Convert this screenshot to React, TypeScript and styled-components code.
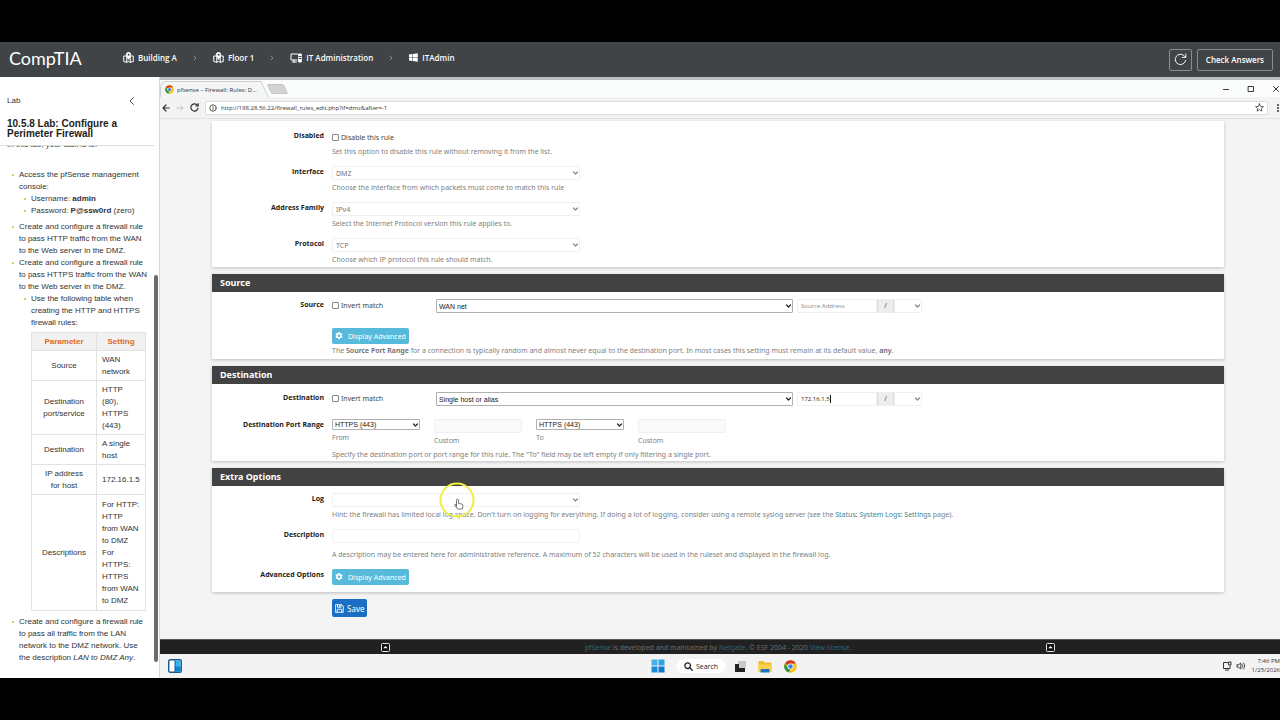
import React from "react";
import styled, { createGlobalStyle, css } from "styled-components";

const GlobalStyle = createGlobalStyle`
  *, *::before, *::after { box-sizing: border-box; }
  html { background: #000; }
  body { margin: 0; background: #000; }
  ul { list-style: none; margin: 0; padding: 0; }
  p, h1, h2 { margin: 0; }
  button, input, select { font: inherit; margin: 0; }
  svg { flex: none; }
`;

const ui = `"Open Sans", "Noto Sans", sans-serif`;
const formFont = `"Noto Sans", "Open Sans", sans-serif`;
const arial = `"Liberation Sans", Arial, sans-serif`;

const Page = styled.div`
  min-height: 100vh;
  display: flex;
  flex-direction: column;
  padding: 42px 0;
  background: #000;
  overflow: hidden;
  font-family: ${ui};
`;

/* ---------- Top bar ---------- */
const TopBar = styled.header`
  height: 35px;
  flex: none;
  display: flex;
  align-items: center;
  padding: 0 7px 0 9px;
  background: #404446;
  color: #fff;
`;
const Logo = styled.div`
  width: 114px;
  font-family: "Lato", sans-serif;
  font-size: 18px;
  line-height: 20px;
  padding-bottom: 3px;
`;
const Crumbs = styled.nav`
  flex: 1;
  display: flex;
  align-items: center;
  gap: 16px;
  padding-bottom: 4px;
`;
const Crumb = styled.a`
  display: flex;
  align-items: center;
  gap: 4px;
  color: #fff;
  text-decoration: none;
  font-weight: 600;
  font-size: 8px;
  line-height: 12px;
  white-space: nowrap;
`;
const BarButton = styled.button`
  height: 22px;
  min-width: 23px;
  margin-left: 5px;
  padding: 0 8px;
  display: flex;
  align-items: center;
  justify-content: center;
  background: transparent;
  border: 1px solid #8b8e90;
  border-radius: 2px;
  color: #fff;
  font-size: 8px;
  font-weight: 600;
  white-space: nowrap;
`;
const SquareButton = styled(BarButton)`
  padding: 0;
`;

/* ---------- Body ---------- */
const Body = styled.div`
  flex: 1;
  display: grid;
  grid-template-columns: 160px minmax(0, 1fr);
  background: #f4f4f4;
`;

/* ---------- Lab panel ---------- */
const Sidebar = styled.aside`
  display: flex;
  flex-direction: column;
  background: #fff;
  border-right: 1px solid #d6d6d6;
  color: #333;
  font-family: ${arial};
  font-size: 8px;
  line-height: 12px;
`;
const SideHead = styled.div`
  padding: 18px 24px 0 7px;
  display: flex;
  justify-content: space-between;
  align-items: center;
`;
const CollapseButton = styled.button`
  display: flex;
  padding: 0;
  border: 0;
  background: none;
  color: #555;
`;
const SideTitle = styled.h1`
  font-size: 10px;
  line-height: 10px;
  font-weight: 700;
  color: #1c1c1c;
  padding: 12px 7px 6px;
`;
const SideScroll = styled.div`
  flex: 1;
  display: grid;
  grid-template-columns: minmax(0, 1fr) 5px;
`;
const Lesson = styled.div`
  padding: 0 4px 0 7px;
  overflow: hidden;
  border-top: 1px solid #ddd;
`;
const Intro = styled.p`
  margin-top: -7px;
  margin-bottom: 18px;
`;
const Track = styled.div`
  padding: 130px 0 16px;
  display: flex;
`;
const Thumb = styled.div`
  width: 4px;
  border-radius: 2px;
  background: #6b6b6b;
`;
const List = styled.ul`
  padding-left: 12px;
`;
const Item = styled.li<{ $after?: number }>`
  position: relative;
  margin-bottom: ${(p) => p.$after ?? 0}px;
  white-space: nowrap;
  &::before {
    content: "";
    position: absolute;
    left: -7px;
    top: 5px;
    width: 2px;
    height: 2px;
    border-radius: 1px;
    background: #a9cf2e;
  }
`;
const Params = styled.table`
  width: 114px;
  table-layout: fixed;
  margin: 3px 0 5px 12px;
  border-collapse: collapse;
  white-space: normal;
  th, td { border: 1px solid #e2e2e2; padding: 3px 5px 2px; font-weight: 400; text-align: left; }
  thead th { background: #f1f1f1; color: #dd6b1f; font-weight: 700; text-align: center; }
  tbody th { text-align: center; }
  tbody tr:last-child td { padding: 4px 5px 3px; }
`;

/* ---------- Browser ---------- */
const Desktop = styled.main`
  display: flex;
  flex-direction: column;
  min-width: 0;
  border-top: 3px solid #b9bfc1;
  overflow: hidden;
`;
const TabStrip = styled.div`
  height: 17px;
  flex: none;
  display: flex;
  align-items: flex-end;
  background: #fbfdfd;
`;
const Tab = styled.div`
  position: relative;
  width: 101px;
  height: 16px;
  display: flex;
  align-items: center;
  gap: 3px;
  padding-left: 4px;
  background: #f4f5f5;
  border: 1px solid #cfcfcf;
  border-width: 1px 0 0 1px;
  border-top-left-radius: 6px;
  color: #333;
  font-size: 6px;
  white-space: nowrap;
  &::after {
    content: "";
    position: absolute;
    right: -4px;
    top: -1px;
    width: 8px;
    height: 16px;
    background: #f4f5f5;
    border: 1px solid #cfcfcf;
    border-width: 1px 1px 0 0;
    transform: skewX(25deg);
  }
`;
const NewTab = styled.button`
  width: 17px;
  height: 10px;
  margin: 0 0 3px 8px;
  padding: 0;
  border: 1px solid #c4c4c4;
  border-radius: 2px;
  background: #d2d4d4;
  transform: skewX(25deg);
`;
const WindowButtons = styled.div`
  margin-left: auto;
  align-self: center;
  display: flex;
  gap: 17px;
  color: #333;
`;
const IconButton = styled.button`
  display: flex;
  padding: 0;
  border: 0;
  background: none;
  color: inherit;
  flex: none;
`;
const Toolbar = styled.div`
  height: 22px;
  flex: none;
  display: flex;
  align-items: center;
  gap: 6px;
  padding-left: 2px;
  background: #f3f3f3;
  border-bottom: 1px solid #e2e2e2;
  color: #333;
`;
const Address = styled.div`
  flex: 1;
  height: 14px;
  display: flex;
  align-items: center;
  gap: 4px;
  padding: 0 3px;
  border: 1px solid #ddd;
  border-radius: 2px;
  background: #fff;
`;
const AddressInput = styled.input`
  flex: 1;
  min-width: 0;
  padding: 0;
  border: 0;
  outline: 0;
  background: transparent;
  color: #333;
  font-size: 6px;
`;

/* ---------- pfSense form ---------- */
const Content = styled.form`
  flex: 1;
  padding: 2px 56px 22px 52px;
  font-family: ${formFont};
  font-size: 7px;
  line-height: 13px;
  color: #777;
`;
const Panel = styled.section`
  margin-bottom: 7px;
  background: #fff;
  box-shadow: 0 1px 3px rgba(0, 0, 0, 0.22);
`;
const PanelTitle = styled.h2`
  height: 18px;
  padding-left: 8px;
  background: #424242;
  color: #fff;
  font-size: 9px;
  line-height: 18px;
  font-weight: 700;
`;
const PanelBody = styled.div<{ $top: number; $bottom: number; $gap?: number }>`
  padding: ${(p) => p.$top}px 0 ${(p) => p.$bottom}px;
  display: flex;
  flex-direction: column;
  gap: ${(p) => p.$gap ?? 8}px;
`;
const Row = styled.div`
  display: grid;
  grid-template-columns: 112px minmax(0, 1fr);
  column-gap: 8px;
`;
const RowLabel = styled.label`
  text-align: right;
  color: #222;
  font-family: ${ui};
  font-weight: 700;
  line-height: 12px;
`;
const Help = styled.div<{ $gap?: number }>`
  margin-top: ${(p) => p.$gap ?? 1}px;
  color: #808080;
  a { color: #45818e; text-decoration: none; }
  b { font-weight: 600; color: #666; }
`;
const Check = styled.label`
  height: 14px;
  display: flex;
  align-items: center;
  gap: 2px;
  color: #444;
  input {
    appearance: none;
    width: 7px;
    height: 7px;
    border: 1px solid #858585;
    border-radius: 1px;
    background: #fff;
  }
`;
type BoxKind = "soft" | "native";
const SelectBox = styled.div<{ $kind: BoxKind; $width: string; $height?: number }>`
  position: relative;
  display: grid;
  align-items: center;
  width: ${(p) => p.$width};
  select {
    appearance: none;
    width: 100%;
    height: ${(p) => p.$height ?? 14}px;
    line-height: 9px;
    padding: 0 14px 0 3px;
    border: 1px solid #f0f0f0;
    border-radius: 1px;
    outline: 0;
    background: #fff;
    color: #777;
    ${(p) =>
      p.$kind === "native" &&
      css`
        padding-left: 2px;
        border-color: #b0b0b0;
        color: #222;
        font-family: ${arial};
      `}
  }
  svg {
    position: absolute;
    right: 1px;
    pointer-events: none;
    color: ${(p) => (p.$kind === "native" ? "#222" : "#888")};
  }
`;
const TextInput = styled.input<{ $muted?: boolean }>`
  display: block;
  width: 100%;
  height: 14px;
  padding: 0 3px;
  border: 1px solid #f0f0f0;
  border-radius: 1px;
  outline: 0;
  background: ${(p) => (p.$muted ? "#f9f9f9" : "#fff")};
  color: #222;
  font-family: ${ui};
  font-size: 6px;
  &::placeholder { color: #888; opacity: 1; }
`;
const Half = styled.div`
  position: relative;
  width: 248px;
`;
const MatchLine = styled.div`
  display: grid;
  grid-template-columns: 104px 361px 80px 17px 28px;
  align-items: start;
  & > label { height: 12px; }
`;
const AddressCell = styled.div`
  position: relative;
`;
const Caret = styled.i`
  position: absolute;
  left: 33px;
  top: 3px;
  width: 1px;
  height: 8px;
  background: #111;
`;
const Slash = styled.span`
  height: 14px;
  text-align: center;
  background: #ededed;
  border: 1px solid #ddd;
  border-width: 0 1px;
  color: #444;
`;
const Ports = styled.div`
  display: flex;
  gap: 14px;
`;
const Port = styled.div`
  width: 88px;
`;
const ActionButton = styled.button<{ $primary?: boolean }>`
  height: ${(p) => (p.$primary ? 18 : 16)}px;
  display: flex;
  align-items: center;
  justify-self: start;
  gap: ${(p) => (p.$primary ? 3 : 5)}px;
  padding: 0 3px;
  border: 0;
  border-radius: 2px;
  background: ${(p) => (p.$primary ? "#1a6fc4" : "#58badb")};
  color: #fff;
  font-size: ${(p) => (p.$primary ? 8 : 7)}px;
  white-space: nowrap;
`;
const Pointer = styled.svg`
  position: absolute;
  left: 106px;
  top: -11px;
  pointer-events: none;
`;
const SaveRow = styled.div`
  padding-left: 120px;
`;
const Footer = styled.footer`
  height: 15px;
  flex: none;
  display: flex;
  justify-content: space-between;
  align-items: center;
  padding: 0 225px 0 221px;
  background: #212121;
  border-top: 1px solid #555;
  color: #6b6b6b;
  font-family: ${formFont};
  font-size: 7px;
  a { color: #2f6478; text-decoration: none; }
`;

/* ---------- Taskbar ---------- */
const Taskbar = styled.div`
  height: 24px;
  flex: none;
  display: grid;
  grid-template-columns: 1fr auto 1fr;
  align-items: center;
  padding-left: 8px;
  background: #f3f3f3;
  color: #333;
`;
const Apps = styled.div`
  display: flex;
  align-items: center;
  gap: 12px;
`;
const SearchPill = styled.button`
  height: 14px;
  display: flex;
  align-items: center;
  gap: 3px;
  margin: 0 -4px 0 -1px;
  padding: 0 8px;
  border: 0;
  border-radius: 7px;
  background: #fff;
  color: #222;
  font-size: 7px;
`;
const Tray = styled.div`
  justify-self: end;
  display: flex;
  align-items: center;
  gap: 4px;
`;
const Clock = styled.time`
  font-size: 6px;
  line-height: 9px;
  text-align: right;
  white-space: nowrap;
  margin-left: 2px;
`;

/* ---------- Icons ---------- */
const line = { fill: "none", stroke: "currentColor", strokeLinecap: "round", strokeLinejoin: "round" } as const;

const MapPin = () => (
  <svg width="11" height="11" viewBox="0 0 22 22" {...line} strokeWidth="2">
    <path d="M5 8H1.500v11l6 1.500V9M14.500 9v11.500l6-1.500V8H17M7.500 20.500l3.500-1.500 3.500 1.500" />
    <path d="M11 14C8 10 6.500 8 6.500 5.500a4.500 4.500 0 0 1 9 0C15.500 8 14 10 11 14z" fill="#fff" />
    <circle cx="11" cy="5.500" r="1" fill="#404446" stroke="#404446" />
  </svg>
);
const Monitor = () => (
  <svg width="12" height="10" viewBox="0 0 24 20" {...line} strokeWidth="2">
    <path d="M14 14H2V2h13M5 18h8M8 14v4" />
    <rect x="18" y="2" width="4.500" height="16" fill="#fff" />
    <path d="M18 7h4M18 11h4" stroke="#404446" />
  </svg>
);
const WinWhite = () => (
  <svg width="9" height="9" viewBox="0 0 18 18" fill="#fff">
    <path d="M0 3l7-1v6.500H0zM8 1.800 17.500.5v8H8zM0 9.500h7V16l-7-1zM8 9.500h9.500v8L8 16.200z" />
  </svg>
);
const Sep = () => (
  <svg width="4" height="6" viewBox="0 0 4 6" {...line} stroke="#8a8c8d">
    <path d="M1 1l2 2-2 2" />
  </svg>
);
const Down = () => (
  <svg width="7" height="6" viewBox="0 0 7 6" {...line} strokeWidth="1.200">
    <path d="M1.500 2l2 2 2-2" />
  </svg>
);
const Reload = ({ size }: { size: number }) => (
  <svg width={size} height={size} viewBox="0 0 14 14" {...line} strokeWidth={size > 10 ? 1 : 1.800}>
    <path d="M12.500 8A5.600 5.600 0 1 1 11 3l1.500 1.500M12.700 1v3.700H9" />
  </svg>
);
const Chrome = ({ size }: { size: number }) => (
  <svg width={size} height={size} viewBox="0 0 24 24">
    <circle cx="12" cy="12" r="11.500" fill="#fbc116" />
    <path d="M12 12 2 6.300A11.500 11.500 0 0 1 22 6.300H12z" fill="#d93a2c" />
    <path d="M2 6.300 7.200 15l4.800 2.500-3.500 5.700A11.500 11.500 0 0 1 2 6.300z" fill="#2a9648" />
    <circle cx="12" cy="12" r="5.500" fill="#fff" />
    <circle cx="12" cy="12" r="4.200" fill="#3f7fe0" />
  </svg>
);
const Gear = () => (
  <svg width="8" height="8" viewBox="0 0 16 16">
    <path
      fill="#fff"
      fillRule="evenodd"
      d="M6.500 0h3l.4 2.200 1.500.8 2-.9 1.600 2.600-1.500 1.600v1.600l1.500 1.700-1.600 2.600-2.100-.8-1.400.8-.4 2.300h-3l-.4-2.300-1.400-.8-2.100.8L1 9.600l1.500-1.700V6.300L1 4.700l1.600-2.600 2 .9 1.500-.8zM8 5a2.500 2.500 0 1 0 0 5 2.500 2.500 0 0 0 0-5z"
    />
  </svg>
);
const SaveIcon = () => (
  <svg width="9" height="9" viewBox="0 0 18 18" {...line} strokeWidth="1.800">
    <path d="M1.500 1.500h12l3 3v12h-15zM5 1.500v5h7v-5M4.500 16.500v-6h9v6" />
    <path d="M9.500 2.500v3" />
  </svg>
);
const UpBox = () => (
  <svg width="9" height="9" viewBox="0 0 9 9">
    <rect x="0.500" y="0.500" width="8" height="8" rx="1" fill="#111" stroke="#e4e4e4" />
    <path d="M2.300 5.300 4.500 3l2.200 2.300z" fill="#fff" />
  </svg>
);

function Select(props: {
  id?: string;
  label?: string;
  value: string;
  kind?: BoxKind;
  width?: string;
  height?: number;
}) {
  return (
    <SelectBox $kind={props.kind ?? "soft"} $width={props.width ?? "100%"} $height={props.height}>
      <select id={props.id} aria-label={props.label} defaultValue={props.value}>
        <option>{props.value}</option>
      </select>
      <Down />
    </SelectBox>
  );
}

function Match(props: { id: string; target: string; address?: string }) {
  return (
    <MatchLine>
      <Check>
        <input type="checkbox" id={props.id} />
        Invert match
      </Check>
      <Select kind="native" width="357px" label={`${props.id} type`} value={props.target} />
      <AddressCell>
        <TextInput aria-label={`${props.id} address`} placeholder="Source Address" defaultValue={props.address} />
        {props.address && <Caret />}
      </AddressCell>
      <Slash>/</Slash>
      <Select label={`${props.id} mask`} value="" />
    </MatchLine>
  );
}

const Advanced = ({ id }: { id?: string }) => (
  <ActionButton type="button" id={id}>
    <Gear />
    Display Advanced
  </ActionButton>
);

function PortPair({ name, id }: { name: string; id: string }) {
  return (
    <>
      <Port>
        <Select id={id} label={`${name} port`} kind="native" height={11} value="HTTPS (443)" />
        <Help>{name}</Help>
      </Port>
      <Port>
        <TextInput $muted aria-label={`${name} custom port`} />
        <Help>Custom</Help>
      </Port>
    </>
  );
}

const fields = [
  { id: "interface", label: "Interface", value: "DMZ", help: "Choose the interface from which packets must come to match this rule" },
  { id: "family", label: "Address Family", value: "IPv4", help: "Select the Internet Protocol version this rule applies to." },
  { id: "protocol", label: "Protocol", value: "TCP", help: "Choose which IP protocol this rule should match." },
];

const params: [React.ReactNode, React.ReactNode][] = [
  ["Source", <>WAN<br />network</>],
  [<>Destination<br />port/service</>, <>HTTP<br />(80),<br />HTTPS<br />(443)</>],
  ["Destination", <>A single<br />host</>],
  [<>IP address<br />for host</>, "172.16.1.5"],
  ["Descriptions", <>For HTTP:<br />HTTP<br />from WAN<br />to DMZ<br />For<br />HTTPS:<br />HTTPS<br />from WAN<br />to DMZ</>],
];

function LabPanel() {
  return (
    <Sidebar>
      <SideHead>
        <span>Lab</span>
        <CollapseButton aria-label="Collapse">
          <svg width="6" height="8" viewBox="0 0 6 8" {...line}>
            <path d="M4.500.5 1 4l3.500 3.500" />
          </svg>
        </CollapseButton>
      </SideHead>
      <SideTitle>
        10.5.8 Lab: Configure a<br />
        Perimeter Firewall
      </SideTitle>
      <SideScroll>
        <Lesson>
          <Intro>In this lab, your task is to:</Intro>
          <List>
            <Item $after={4}>
              Access the pfSense management
              <br />
              console:
              <List>
                <Item>Username: <b>admin</b></Item>
                <Item>Password: <b>P@ssw0rd</b> (zero)</Item>
              </List>
            </Item>
            <Item>
              Create and configure a firewall rule
              <br />
              to pass HTTP traffic from the WAN
              <br />
              to the Web server in the DMZ.
            </Item>
            <Item>
              Create and configure a firewall rule
              <br />
              to pass HTTPS traffic from the WAN
              <br />
              to the Web server in the DMZ.
              <List>
                <Item>
                  Use the following table when
                  <br />
                  creating the HTTP and HTTPS
                  <br />
                  firewall rules:
                </Item>
              </List>
              <Params>
                <colgroup>
                  <col width="65" />
                  <col width="49" />
                </colgroup>
                <thead>
                  <tr>
                    <th scope="col">Parameter</th>
                    <th scope="col">Setting</th>
                  </tr>
                </thead>
                <tbody>
                  {params.map(([name, setting], i) => (
                    <tr key={i}>
                      <th scope="row">{name}</th>
                      <td>{setting}</td>
                    </tr>
                  ))}
                </tbody>
              </Params>
            </Item>
            <Item>
              Create and configure a firewall rule
              <br />
              to pass all traffic from the LAN
              <br />
              network to the DMZ network. Use
              <br />
              the description <i>LAN to DMZ Any</i>.
            </Item>
          </List>
        </Lesson>
        <Track>
          <Thumb />
        </Track>
      </SideScroll>
    </Sidebar>
  );
}

function BrowserChrome() {
  return (
    <>
      <TabStrip>
        <Tab>
          <Chrome size={9} />
          pfsense – Firewall: Rules: D...
        </Tab>
        <NewTab aria-label="New tab" />
        <WindowButtons>
          <IconButton aria-label="Minimize">
            <svg width="8" height="8" viewBox="0 0 8 8" {...line}><path d="M1.500 4.500h5" /></svg>
          </IconButton>
          <IconButton aria-label="Maximize">
            <svg width="8" height="8" viewBox="0 0 8 8" {...line}><path d="M1.500 1.500h5v5h-5z" /></svg>
          </IconButton>
          <IconButton aria-label="Close">
            <svg width="8" height="8" viewBox="0 0 8 8" {...line}><path d="M1.500 1.500l5 5M6.500 1.500l-5 5" /></svg>
          </IconButton>
        </WindowButtons>
      </TabStrip>
      <Toolbar>
        <IconButton aria-label="Back">
          <svg width="8" height="8" viewBox="0 0 8 8" {...line} strokeWidth="1.200"><path d="M7.300 4H1M4 1 1 4l3 3" /></svg>
        </IconButton>
        <IconButton aria-label="Forward">
          <svg width="8" height="8" viewBox="0 0 8 8" {...line} stroke="#c4c4c4"><path d="M.7 4H7M4.500 1.500 7 4 4.500 6.500" /></svg>
        </IconButton>
        <IconButton aria-label="Reload">
          <Reload size={9} />
        </IconButton>
        <Address>
          <svg width="8" height="8" viewBox="0 0 16 16" {...line} strokeWidth="1.600">
            <circle cx="8" cy="8" r="6.500" />
            <path d="M8 7.500v4M8 4.600v.2" />
          </svg>
          <AddressInput aria-label="Address" defaultValue="http://198.28.56.22/firewall_rules_edit.php?if=dmz&after=-1" />
          <svg width="9" height="9" viewBox="0 0 18 18" {...line} strokeWidth="1.500">
            <path d="M9 1.500l2.200 5.200 5.600.4-4.300 3.700 1.300 5.500L9 13.400l-4.800 2.900 1.300-5.500L1.200 7.100l5.600-.4z" />
          </svg>
        </Address>
        <IconButton aria-label="Menu">
          <svg width="6" height="10" viewBox="0 0 6 10" fill="#333">
            <circle cx="4" cy="2" r="1" /><circle cx="4" cy="5" r="1" /><circle cx="4" cy="8" r="1" />
          </svg>
        </IconButton>
      </Toolbar>
    </>
  );
}

function RuleForm() {
  return (
    <Content onSubmit={(e) => e.preventDefault()}>
      <Panel>
        <PanelBody $top={9} $bottom={1}>
          <Row>
            <RowLabel htmlFor="disabled">Disabled</RowLabel>
            <div>
              <Check>
                <input type="checkbox" id="disabled" />
                Disable this rule
              </Check>
              <Help>Set this option to disable this rule without removing it from the list.</Help>
            </div>
          </Row>
          {fields.map((f) => (
            <Row key={f.id}>
              <RowLabel htmlFor={f.id}>{f.label}</RowLabel>
              <div>
                <Select id={f.id} value={f.value} width="248px" />
                <Help>{f.help}</Help>
              </div>
            </Row>
          ))}
        </PanelBody>
      </Panel>

      <Panel>
        <PanelTitle>Source</PanelTitle>
        <PanelBody $top={7} $bottom={2}>
          <Row>
            <RowLabel htmlFor="source">Source</RowLabel>
            <div>
              <Match id="source" target="WAN net" />
              <Help $gap={15}>
                <Advanced />
                The <b>Source Port Range</b> for a connection is typically random and almost never equal to the
                destination port. In most cases this setting must remain at its default value, <b>any</b>.
              </Help>
            </div>
          </Row>
        </PanelBody>
      </Panel>

      <Panel>
        <PanelTitle>Destination</PanelTitle>
        <PanelBody $top={8} $bottom={0} $gap={13}>
          <Row>
            <RowLabel htmlFor="destination">Destination</RowLabel>
            <Match id="destination" target="Single host or alias" address="172.16.1.5" />
          </Row>
          <Row>
            <RowLabel htmlFor="portFrom">Destination Port Range</RowLabel>
            <div>
              <Ports>
                <PortPair name="From" id="portFrom" />
                <PortPair name="To" id="portTo" />
              </Ports>
              <Help>
                Specify the destination port or port range for this rule. The "To" field may be left empty if only
                filtering a single port.
              </Help>
            </div>
          </Row>
        </PanelBody>
      </Panel>

      <Panel>
        <PanelTitle>Extra Options</PanelTitle>
        <PanelBody $top={7} $bottom={7}>
          <Row>
            <RowLabel htmlFor="log">Log</RowLabel>
            <div>
              <Half>
                <Select id="log" value="" />
                <Pointer width="38" height="38" viewBox="0 0 38 38" fill="none">
                  <circle cx="19" cy="18" r="16.500" stroke="#eef043" strokeWidth="2" />
                  <path
                    d="M18.500 24.500v-6.300a1 1 0 0 1 2 0v3.200l3.300.7c.8.200 1.200.7 1.100 1.500l-.6 3.400h-4.600l-3-3.600c-.5-.8.400-1.500 1.100-1z"
                    fill="#fff"
                    stroke="#666"
                    strokeWidth="0.900"
                    strokeLinejoin="round"
                  />
                </Pointer>
              </Half>
              <Help>
                Hint: the firewall has limited local log space. Don't turn on logging for everything. If doing a lot of
                logging, consider using a remote syslog server (see the <a href="#logs">Status: System Logs: Settings</a>{" "}
                page).
              </Help>
            </div>
          </Row>
          <Row>
            <RowLabel htmlFor="description">Description</RowLabel>
            <div>
              <Half>
                <TextInput id="description" />
              </Half>
              <Help $gap={5}>
                A description may be entered here for administrative reference. A maximum of 52 characters will be used
                in the ruleset and displayed in the firewall log.
              </Help>
            </div>
          </Row>
          <Row>
            <RowLabel htmlFor="advanced">Advanced Options</RowLabel>
            <Advanced id="advanced" />
          </Row>
        </PanelBody>
      </Panel>
      <SaveRow>
        <ActionButton $primary type="submit">
          <SaveIcon />
          Save
        </ActionButton>
      </SaveRow>
    </Content>
  );
}

function TaskbarView() {
  return (
    <Taskbar>
      <svg width="14" height="14" viewBox="0 0 14 14">
        <rect x="0.700" y="0.700" width="12.600" height="12.600" rx="1.500" fill="#fff" stroke="#17578c" strokeWidth="1.400" />
        <path d="M7 1.400h5.600v11.200H7z" fill="#35b1ec" />
        <path d="M7 7.500h5.600v5.100H7z" fill="#1583d2" />
        <path d="M7 1v12" stroke="#17578c" />
      </svg>
      <Apps>
        <svg width="14" height="14" viewBox="0 0 14 14">
          <path d="M.5.5h6v6h-6z" fill="#3fb3ea" />
          <path d="M7.500.5h6v6h-6z" fill="#2da3e4" />
          <path d="M.5 7.500h6v6h-6z" fill="#1a8bd8" />
          <path d="M7.500 7.500h6v6h-6z" fill="#0f78cc" />
        </svg>
        <SearchPill>
          <svg width="9" height="9" viewBox="0 0 9 9" {...line} strokeWidth="1.300">
            <circle cx="3.700" cy="3.700" r="2.800" />
            <path d="M5.900 5.900 8.200 8.200" />
          </svg>
          Search
        </SearchPill>
        <svg width="12" height="12" viewBox="0 0 12 12">
          <path d="M4 1h8v7H4z" fill="#c9c9c9" />
          <path d="M1 4h4v4h6v4H1z" fill="#222" />
        </svg>
        <svg width="14" height="13" viewBox="0 0 14 13">
          <path d="M.5 2c0-.6.4-1 1-1h3.500l1.500 1.500h6c.6 0 1 .4 1 1V12H.5z" fill="#f0bc2d" />
          <path d="M.5 4.500h13V12H.5z" fill="#fbd14b" />
          <path d="M2.500 12.500V10c0-.6.4-1 1-1h7c.6 0 1 .4 1 1v2.500z" fill="#1a74bd" />
        </svg>
        <Chrome size={13} />
      </Apps>
      <Tray>
        <svg width="10" height="10" viewBox="0 0 10 10" {...line}>
          <path d="M6 1.500H1.500v6h6.500V5M3.500 9h3" />
          <rect x="7" y="1" width="2" height="3" />
        </svg>
        <svg width="10" height="10" viewBox="0 0 10 10" {...line} strokeWidth="0.900">
          <path d="M1 3.800v2.400h1.500L4.800 8V2L2.500 3.800zM6.200 3.500c.8.800.8 2.200 0 3M7.500 2c1.700 1.700 1.700 4.300 0 6" />
        </svg>
        <Clock>
          7:46 PM
          <br />
          1/25/2026
        </Clock>
      </Tray>
    </Taskbar>
  );
}

export default function App() {
  return (
    <Page>
      <GlobalStyle />
      <TopBar>
        <Logo>CompTIA</Logo>
        <Crumbs>
          <Crumb href="#building"><MapPin />Building A</Crumb>
          <Sep />
          <Crumb href="#floor"><MapPin />Floor 1</Crumb>
          <Sep />
          <Crumb href="#it"><Monitor />IT Administration</Crumb>
          <Sep />
          <Crumb href="#admin"><WinWhite />ITAdmin</Crumb>
        </Crumbs>
        <SquareButton aria-label="Reset lab">
          <Reload size={13} />
        </SquareButton>
        <BarButton>Check Answers</BarButton>
      </TopBar>
      <Body>
        <LabPanel />
        <Desktop>
          <BrowserChrome />
          <RuleForm />
          <Footer>
            <UpBox />
            <span>
              <a href="#pfsense">pfSense</a> is developed and maintained by <a href="#netgate">Netgate.</a> © ESF 2004 - 2020{" "}
              <a href="#license">View license.</a>
            </span>
            <UpBox />
          </Footer>
          <TaskbarView />
        </Desktop>
      </Body>
    </Page>
  );
}
